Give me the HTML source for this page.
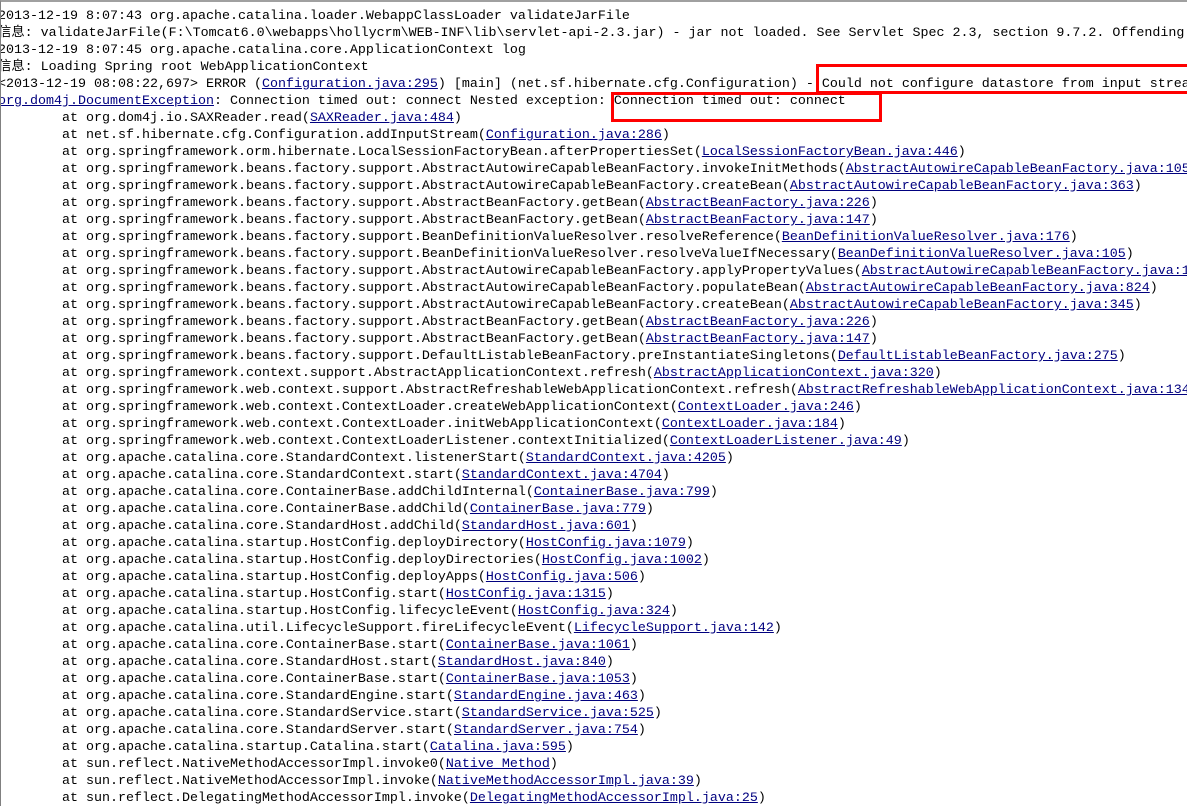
<!DOCTYPE html>
<html><head><meta charset="utf-8"><style>
html,body{margin:0;padding:0;background:#fff;width:1187px;height:806px;overflow:hidden}
#w{position:absolute;left:0;top:0;width:1187px;height:806px;overflow:hidden;border-top:2px solid #a0a0a0;border-left:1px solid #808080;box-sizing:border-box}
pre{margin:0;position:absolute;left:-3px;top:6px;font-family:"Liberation Mono","Noto Sans CJK SC",monospace;font-size:13.33px;line-height:17px;color:#000;white-space:pre}
a{color:#00007f;text-decoration:underline}
.box{position:absolute;border:3px solid #f00;box-sizing:border-box}
</style></head><body><div id="w">
<pre>2013-12-19 8:07:43 org.apache.catalina.loader.WebappClassLoader validateJarFile
信息: validateJarFile(F:\Tomcat6.0\webapps\hollycrm\WEB-INF\lib\servlet-api-2.3.jar) - jar not loaded. See Servlet Spec 2.3, section 9.7.2. Offending class: javax/servlet/Servlet.class
2013-12-19 8:07:45 org.apache.catalina.core.ApplicationContext log
信息: Loading Spring root WebApplicationContext
&lt;2013-12-19 08:08:22,697&gt; ERROR (<a>Configuration.java:295</a>) [main] (net.sf.hibernate.cfg.Configuration) - Could not configure datastore from input stream
<a>org.dom4j.DocumentException</a>: Connection timed out: connect Nested exception: Connection timed out: connect
        at org.dom4j.io.SAXReader.read(<a>SAXReader.java:484</a>)
        at net.sf.hibernate.cfg.Configuration.addInputStream(<a>Configuration.java:286</a>)
        at org.springframework.orm.hibernate.LocalSessionFactoryBean.afterPropertiesSet(<a>LocalSessionFactoryBean.java:446</a>)
        at org.springframework.beans.factory.support.AbstractAutowireCapableBeanFactory.invokeInitMethods(<a>AbstractAutowireCapableBeanFactory.java:1057</a>)
        at org.springframework.beans.factory.support.AbstractAutowireCapableBeanFactory.createBean(<a>AbstractAutowireCapableBeanFactory.java:363</a>)
        at org.springframework.beans.factory.support.AbstractBeanFactory.getBean(<a>AbstractBeanFactory.java:226</a>)
        at org.springframework.beans.factory.support.AbstractBeanFactory.getBean(<a>AbstractBeanFactory.java:147</a>)
        at org.springframework.beans.factory.support.BeanDefinitionValueResolver.resolveReference(<a>BeanDefinitionValueResolver.java:176</a>)
        at org.springframework.beans.factory.support.BeanDefinitionValueResolver.resolveValueIfNecessary(<a>BeanDefinitionValueResolver.java:105</a>)
        at org.springframework.beans.factory.support.AbstractAutowireCapableBeanFactory.applyPropertyValues(<a>AbstractAutowireCapableBeanFactory.java:1013</a>)
        at org.springframework.beans.factory.support.AbstractAutowireCapableBeanFactory.populateBean(<a>AbstractAutowireCapableBeanFactory.java:824</a>)
        at org.springframework.beans.factory.support.AbstractAutowireCapableBeanFactory.createBean(<a>AbstractAutowireCapableBeanFactory.java:345</a>)
        at org.springframework.beans.factory.support.AbstractBeanFactory.getBean(<a>AbstractBeanFactory.java:226</a>)
        at org.springframework.beans.factory.support.AbstractBeanFactory.getBean(<a>AbstractBeanFactory.java:147</a>)
        at org.springframework.beans.factory.support.DefaultListableBeanFactory.preInstantiateSingletons(<a>DefaultListableBeanFactory.java:275</a>)
        at org.springframework.context.support.AbstractApplicationContext.refresh(<a>AbstractApplicationContext.java:320</a>)
        at org.springframework.web.context.support.AbstractRefreshableWebApplicationContext.refresh(<a>AbstractRefreshableWebApplicationContext.java:134</a>)
        at org.springframework.web.context.ContextLoader.createWebApplicationContext(<a>ContextLoader.java:246</a>)
        at org.springframework.web.context.ContextLoader.initWebApplicationContext(<a>ContextLoader.java:184</a>)
        at org.springframework.web.context.ContextLoaderListener.contextInitialized(<a>ContextLoaderListener.java:49</a>)
        at org.apache.catalina.core.StandardContext.listenerStart(<a>StandardContext.java:4205</a>)
        at org.apache.catalina.core.StandardContext.start(<a>StandardContext.java:4704</a>)
        at org.apache.catalina.core.ContainerBase.addChildInternal(<a>ContainerBase.java:799</a>)
        at org.apache.catalina.core.ContainerBase.addChild(<a>ContainerBase.java:779</a>)
        at org.apache.catalina.core.StandardHost.addChild(<a>StandardHost.java:601</a>)
        at org.apache.catalina.startup.HostConfig.deployDirectory(<a>HostConfig.java:1079</a>)
        at org.apache.catalina.startup.HostConfig.deployDirectories(<a>HostConfig.java:1002</a>)
        at org.apache.catalina.startup.HostConfig.deployApps(<a>HostConfig.java:506</a>)
        at org.apache.catalina.startup.HostConfig.start(<a>HostConfig.java:1315</a>)
        at org.apache.catalina.startup.HostConfig.lifecycleEvent(<a>HostConfig.java:324</a>)
        at org.apache.catalina.util.LifecycleSupport.fireLifecycleEvent(<a>LifecycleSupport.java:142</a>)
        at org.apache.catalina.core.ContainerBase.start(<a>ContainerBase.java:1061</a>)
        at org.apache.catalina.core.StandardHost.start(<a>StandardHost.java:840</a>)
        at org.apache.catalina.core.ContainerBase.start(<a>ContainerBase.java:1053</a>)
        at org.apache.catalina.core.StandardEngine.start(<a>StandardEngine.java:463</a>)
        at org.apache.catalina.core.StandardService.start(<a>StandardService.java:525</a>)
        at org.apache.catalina.core.StandardServer.start(<a>StandardServer.java:754</a>)
        at org.apache.catalina.startup.Catalina.start(<a>Catalina.java:595</a>)
        at sun.reflect.NativeMethodAccessorImpl.invoke0(<a>Native Method</a>)
        at sun.reflect.NativeMethodAccessorImpl.invoke(<a>NativeMethodAccessorImpl.java:39</a>)
        at sun.reflect.DelegatingMethodAccessorImpl.invoke(<a>DelegatingMethodAccessorImpl.java:25</a>)
</pre>
<div class="box" style="left:815px;top:62px;width:378px;height:30px"></div>
<div class="box" style="left:610px;top:90px;width:271px;height:30px"></div>
</div></body></html>
